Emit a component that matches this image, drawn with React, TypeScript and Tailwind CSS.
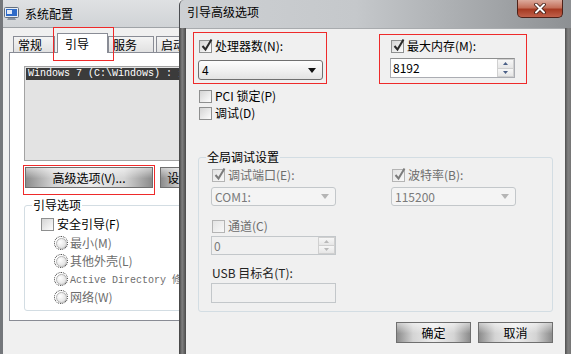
import { ReactNode } from "react";

const ui = "font-['Noto_Sans_CJK_SC',sans-serif] text-[12px] leading-[16px]";
const mono = "font-['Liberation_Mono','Noto_Sans_CJK_SC',monospace] text-[10px]";
const red = "pointer-events-none absolute border border-[#ee2a2a]";

function CheckBox({ checked = false, disabled = false }: { checked?: boolean; disabled?: boolean }) {
  const box = disabled
    ? "border-[#b4b4b4] bg-[linear-gradient(135deg,#e4e4e4,#f8f8f8)]"
    : "border-[#8e8f8f] bg-[linear-gradient(135deg,#d4d4d4,#fdfdfd)]";
  return (
    <span className={`relative flex h-[13px] w-[13px] shrink-0 border ${box}`}>
      {checked && (
        <svg className="absolute -top-[3px] left-[1px]" width="12" height="14" viewBox="0 0 12 14">
          <path d="M1.5 8 L4.5 11.5 L10.5 1.5" fill="none" stroke={disabled ? "#7c7c7c" : "#2a2a2a"} strokeWidth="2" />
        </svg>
      )}
    </span>
  );
}

function CheckRow({ label, checked = false, disabled = false, className = "" }: { label: string; checked?: boolean; disabled?: boolean; className?: string }) {
  return (
    <div className={`flex h-[16px] items-center gap-[3px] whitespace-nowrap ${className}`}>
      <CheckBox checked={checked} disabled={disabled} />
      <span className={disabled ? "text-[#6d6d6d]" : "text-black"}>{label}</span>
    </div>
  );
}

function Radio({ label, className = "" }: { label: ReactNode; className?: string }) {
  return (
    <div className={`flex h-[16px] items-center gap-[2px] whitespace-nowrap text-[#6d6d6d] ${className}`}>
      <span className="flex h-[14px] w-[14px] shrink-0 items-center justify-center rounded-full border border-dotted border-[#333]">
        <span className="h-[11px] w-[11px] rounded-full border border-[#b3b3b3] bg-[radial-gradient(circle_at_35%_35%,#ffffff,#d8d8d8)]" />
      </span>
      <span>{label}</span>
    </div>
  );
}

function Select({ value, disabled = false, className = "" }: { value: string; disabled?: boolean; className?: string }) {
  const look = disabled
    ? "border-[#c3c7ca] bg-[#f4f4f4] text-[#7a7a7a]"
    : "border-[#707070] bg-[linear-gradient(#fdfdfd,#f1f1f1_50%,#e3e3e3)] text-black";
  return (
    <div className={`flex w-[125px] items-center justify-between rounded-[3px] border pl-[3px] pr-[6px] ${look} ${className}`}>
      <span>{value}</span>
      <svg width="8" height="5" viewBox="0 0 8 5">
        <path d="M0 0H8L4 5Z" fill={disabled ? "#b5b5b5" : "#111"} />
      </svg>
    </div>
  );
}

function SpinInput({ value, disabled = false, className = "" }: { value: string; disabled?: boolean; className?: string }) {
  const arrow = disabled ? "#b9b9b9" : "#4a5f86";
  const look = disabled ? "border-[#c3c7ca] bg-[#f0f0f0] text-[#7a7a7a]" : "border-[#abadb3] border-t-[#8e8f8f] bg-white text-black";
  return (
    <div className={`flex w-[125px] border ${look} ${className}`}>
      <span className="flex flex-1 items-center pl-[2px]">{value}</span>
      <div className="flex w-[17px] flex-col">
        <span className="flex flex-1 items-center justify-center border border-[#d0d0d0] bg-[linear-gradient(#f7f7f7,#e6e6e6)]">
          <svg width="5" height="3" viewBox="0 0 5 3"><path d="M0 3H5L2.5 0Z" fill={arrow} /></svg>
        </span>
        <span className="flex flex-1 items-center justify-center border border-t-0 border-[#d0d0d0] bg-[linear-gradient(#f7f7f7,#e6e6e6)]">
          <svg width="5" height="3" viewBox="0 0 5 3"><path d="M0 0H5L2.5 3Z" fill={arrow} /></svg>
        </span>
      </div>
    </div>
  );
}

function Button({ children, className = "" }: { children: ReactNode; className?: string }) {
  return (
    <div className={`flex h-[21px] shrink-0 items-center justify-center whitespace-nowrap border border-[#6f6f6f] bg-[image:linear-gradient(rgba(255,255,255,0.55),rgba(255,255,255,0)_55%),linear-gradient(to_right,#8c8c8c,#d4d4d4_22%,#ececec_50%,#d4d4d4_78%,#8c8c8c)] ${className}`}>
      {children}
    </div>
  );
}

function Tab({ children, className = "" }: { children: ReactNode; className?: string }) {
  return (
    <div className={`flex h-[16px] items-center whitespace-nowrap border border-b-0 border-[#898c95] bg-[linear-gradient(#f4f4f4,#e1e1e1)] pl-[4px] ${className}`}>
      {children}
    </div>
  );
}

function MonitorIcon() {
  return (
    <svg width="15" height="14" viewBox="0 0 15 14">
      <rect x="0.5" y="0.5" width="14" height="10" rx="1" fill="#e9eef4" stroke="#64707e" />
      <rect x="2" y="2" width="11" height="7" fill="#2e6bc8" />
      <rect x="3" y="3" width="5" height="4" fill="#ffffff" opacity="0.85" />
      <path d="M4 11H11L12 13H3Z" fill="#8994a2" />
    </svg>
  );
}

function SystemConfigWindow() {
  return (
    <div className="relative h-full w-[179px] shrink-0 overflow-hidden">
      <div className="flex h-full w-[260px] flex-col border-l-[3px] border-[#74777b] bg-[#f0f0f0]">
        <div className="flex h-[27px] shrink-0 items-center gap-[6px] bg-[linear-gradient(#dfe1e3,#d0d3d6)] pl-[1px]">
          <MonitorIcon />
          <span>系统配置</span>
        </div>
        <div className="flex flex-1 flex-col border-t border-[#9fa3a7] pl-[6px] pt-[5px]">
          <div className="flex h-[19px] items-end">
            <Tab className="ml-[4px] w-[42px]">常规</Tab>
            <div className="relative z-10 -mb-px ml-[2px] flex h-[20px] w-[51px] border border-b-0 border-[#898c95] bg-white pl-[7px] pt-[2px]">
              引导
            </div>
            <Tab className="w-[46px]">服务</Tab>
            <Tab className="ml-[2px] w-[46px]">启动</Tab>
          </div>
          <div className="h-[269px] border border-[#898c95] bg-white pl-[14px] pt-[13px]">
            <div className="h-[95px] w-[230px] border border-[#a3a3a3] bg-[#e3e3e3] p-px">
              <div className={`h-[12px] whitespace-nowrap bg-[#3b3b3b] pl-[2px] leading-[12px] text-white ${mono}`}>
                {"Windows 7 (C:\\Windows) : 当前 OS; 默认 OS"}
              </div>
            </div>
            <div className="mt-[6px] flex gap-[7px]">
              <Button className="ml-px w-[128px]">高级选项(V)...</Button>
              <Button className="w-[90px]">设为默认值(S)</Button>
            </div>
            <fieldset className="mt-[10px] h-[113px] w-[230px] rounded-[3px] border border-[#d3dde3]">
              <legend className="ml-[7px] px-px leading-[14px]">引导选项</legend>
              <div className="pl-[16px] pt-[4px]">
                <CheckRow label="安全引导(F)" />
                <div className="ml-[13px]">
                  <Radio className="mt-[3px]" label="最小(M)" />
                  <Radio className="mt-[2px]" label="其他外壳(L)" />
                  <Radio className="mt-[2px]" label={<span className={mono}>Active Directory 修复</span>} />
                  <Radio className="mt-[2px]" label="网络(W)" />
                </div>
              </div>
            </fieldset>
          </div>
        </div>
      </div>
      <div className={`${red} left-[53px] top-[27px] h-[34px] w-[61px]`} />
      <div className={`${red} left-[23px] top-[165px] h-[30px] w-[132px]`} />
    </div>
  );
}

function CloseButton() {
  return (
    <div className="mr-[8px] flex h-[18px] w-[46px] items-center justify-center rounded-b-[5px] border border-t-0 border-[#4e2219] bg-[linear-gradient(#dcaa9c,#c4705a_45%,#a63a22_55%,#c0604a)]">
      <svg width="12" height="11" viewBox="0 0 12 11">
        <path d="M2 1.5L10 9.5M10 1.5L2 9.5" stroke="#3b1810" strokeWidth="3.6" strokeLinecap="round" />
        <path d="M2 1.5L10 9.5M10 1.5L2 9.5" stroke="#ffffff" strokeWidth="2" strokeLinecap="round" />
      </svg>
    </div>
  );
}

function AdvancedDialog() {
  return (
    <div className="flex h-full w-[392px] shrink-0 flex-col">
      <div className="flex h-[28px] shrink-0 items-start justify-between rounded-tl-[5px] border-l border-[#4a4c50] bg-[linear-gradient(to_right,#cdd0d3,#c5c8cb_45%,#a2a5a8_80%,#8d9093)]">
        <span className="pl-[7px] pt-[4px]">引导高级选项</span>
        <CloseButton />
      </div>
      <div className="flex flex-1">
        <div className="w-[7px] bg-[linear-gradient(to_right,#3f3f3f,#808080_45%,#4a4a4a)]" />
        <div className="relative flex flex-1 flex-col border-t border-[#a8abae] bg-[#f0f0f0] pt-[9px]">
          <div className="flex pl-[12px]">
            <div className="w-[125px]">
              <CheckRow className="ml-px" label="处理器数(N):" checked />
              <Select className="mt-[6px] h-[20px]" value="4" />
            </div>
            <div className="ml-[67px] w-[125px]">
              <CheckRow className="ml-px" label="最大内存(M):" checked />
              <SpinInput className="mt-[4px] h-[20px]" value="8192" />
            </div>
          </div>
          <div className="pl-[13px]">
            <CheckRow className="mt-[8px]" label="PCI 锁定(P)" />
            <CheckRow className="mt-px" label="调试(D)" />
          </div>
          <fieldset className="ml-[12px] mt-[29px] h-[162px] w-[355px] rounded-[3px] border border-[#d3dde3]">
            <legend className="ml-[7px] px-px leading-[14px]">全局调试设置</legend>
            <div className="pl-[12px] pt-[3px]">
              <div className="flex">
                <div className="w-[125px]">
                  <CheckRow className="ml-px" label="调试端口(E):" checked disabled />
                  <Select className="mt-[4px] h-[19px]" value="COM1:" disabled />
                </div>
                <div className="ml-[55px] w-[125px]">
                  <CheckRow className="ml-px" label="波特率(B):" checked disabled />
                  <Select className="mt-[4px] h-[19px]" value="115200" disabled />
                </div>
              </div>
              <CheckRow className="ml-px mt-[12px]" label="通道(C)" disabled />
              <SpinInput className="mt-[2px] h-[19px]" value="0" disabled />
              <div className="ml-px mt-[10px] h-[16px] text-[#222]">USB 目标名(T):</div>
              <div className="mt-[2px] h-[20px] w-[125px] border border-[#c3c7ca] bg-[#f0f0f0]" />
            </div>
          </fieldset>
          <div className="mt-[10px] flex justify-end gap-[7px] pr-[12px]">
            <Button className="w-[75px]">确定</Button>
            <Button className="w-[75px]">取消</Button>
          </div>
          <div className={`${red} left-[7px] top-[3px] h-[52px] w-[134px]`} />
          <div className={`${red} left-[193px] top-[5px] h-[50px] w-[148px]`} />
        </div>
        <div className="w-[6px] bg-[linear-gradient(to_right,#4e4e4e,#808080_50%,#767676)]" />
      </div>
    </div>
  );
}

export default function App() {
  return (
    <div className={`flex h-[354px] w-[571px] overflow-hidden bg-[#f0f0f0] text-black ${ui}`}>
      <SystemConfigWindow />
      <AdvancedDialog />
    </div>
  );
}
